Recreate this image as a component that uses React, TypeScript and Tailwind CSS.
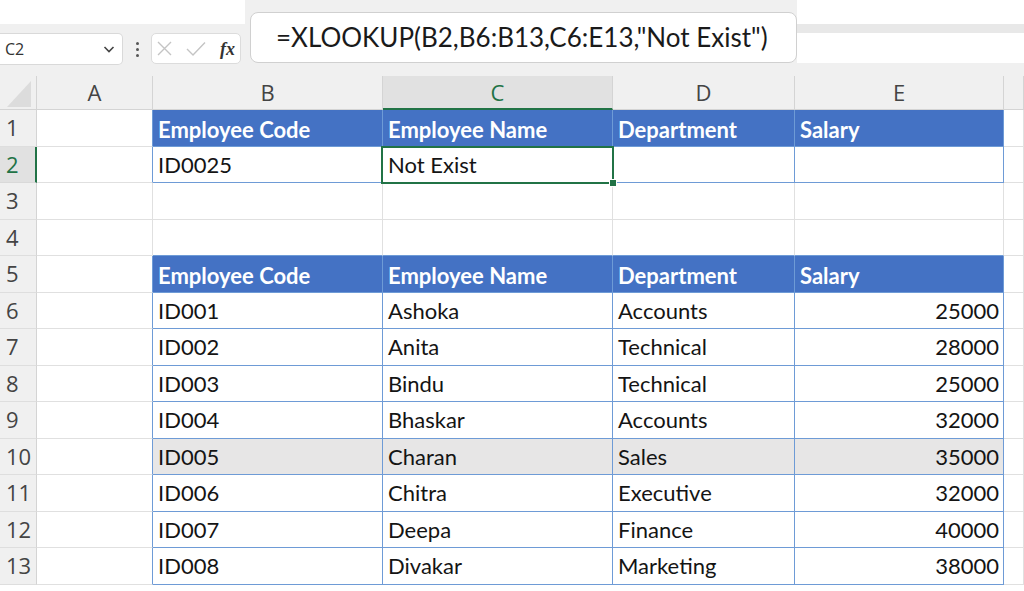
import React from "react";

const header = ["Employee Code", "Employee Name", "Department", "Salary"];
const data: string[][] = [
  ["ID001", "Ashoka", "Accounts", "25000"],
  ["ID002", "Anita", "Technical", "28000"],
  ["ID003", "Bindu", "Technical", "25000"],
  ["ID004", "Bhaskar", "Accounts", "32000"],
  ["ID005", "Charan", "Sales", "35000"],
  ["ID006", "Chitra", "Executive", "32000"],
  ["ID007", "Deepa", "Finance", "40000"],
  ["ID008", "Divakar", "Marketing", "38000"],
];

function inTable(r: number, c: number) {
  if (c < 1 || c > 4) return false;
  if (r === 1 || r === 2) return true;
  if (r >= 5 && r <= 13) return true;
  return false;
}
function isHeader(r: number) {
  return r === 1 || r === 5;
}
function content(r: number, c: number): string {
  if (c < 1 || c > 4) return "";
  if (r === 1 || r === 5) return header[c - 1];
  if (r === 2) return c === 1 ? "ID0025" : c === 2 ? "Not Exist" : "";
  if (r >= 6 && r <= 13) return data[r - 6][c - 1];
  return "";
}

const BLUE = "#4472c4";
const TB = "#6e9bd6";
const GRID = "#e0e0e0";

export default function App() {
  const cols = ["A", "B", "C", "D", "E", ""];
  const rows = Array.from({ length: 13 }, (_, i) => i + 1);
  return (
    <div
      className="w-[1024px] h-[591px] overflow-hidden bg-white relative"
      style={{ fontFamily: "Lato, 'Noto Sans', sans-serif" }}
    >
      {/* toolbar */}
      <div className="flex h-[76px]">
        <div className="w-[245px] flex flex-col">
          <div className="h-[24px] bg-white" />
          <div className="flex-1 bg-[#f0f0f0] flex items-start pt-[9px]">
            <div className="w-[123px] h-[32px] bg-white rounded-r-[5px] border border-l-0 border-[#d9d9d9] flex items-center justify-between pl-[5px] pr-[6px]">
              <span className="text-[16px] text-[#333]" style={{ fontFamily: "'Open Sans', sans-serif" }}>C2</span>
              <svg width="14" height="14" viewBox="0 0 14 14">
                <path d="M2.5 5 L7 9.5 L11.5 5" stroke="#444" strokeWidth="1.6" fill="none" />
              </svg>
            </div>
            <div className="w-[28px] h-[32px] flex flex-col items-center justify-center gap-[3px]">
              <div className="w-[3px] h-[3px] rounded-full bg-[#555]" />
              <div className="w-[3px] h-[3px] rounded-full bg-[#555]" />
              <div className="w-[3px] h-[3px] rounded-full bg-[#555]" />
            </div>
            <div className="w-[90px] h-[31px] bg-white rounded-[5px] border border-[#dcdcdc] flex items-center pl-[5px]">
              <svg width="15" height="15" viewBox="0 0 15 15">
                <path d="M1 1 L14 14 M14 1 L1 14" stroke="#c4c4c4" strokeWidth="1.4" fill="none" />
              </svg>
              <svg className="ml-[14px]" width="20" height="16" viewBox="0 0 20 16">
                <path d="M1 8 L7 14 L19 1.5" stroke="#c4c4c4" strokeWidth="1.4" fill="none" />
              </svg>
              <span
                className="ml-[14px] italic font-bold text-[18px] text-[#333] leading-none"
                style={{ fontFamily: "'Liberation Serif', serif" }}
              >
                fx
              </span>
            </div>
          </div>
        </div>
        <div className="w-[552px] bg-[#f0f0f0] pt-[12px] pl-[5px]">
          <div
            className="h-[51px] rounded-[8px] border border-[#d0d0d0] bg-white flex items-center pl-[25px] text-[26px] text-[#1a1a1a]"
            style={{ fontFamily: "Lato, sans-serif" }}
          >
            =XLOOKUP(B2,B6:B13,C6:E13,"Not Exist")
          </div>
        </div>
        <div className="flex-1 flex flex-col">
          <div className="h-[24px] bg-white" />
          <div className="h-[9px] bg-[#e8e8e8]" />
          <div className="h-[30px] bg-white" />
          <div className="flex-1 bg-[#f0f0f0]" />
        </div>
      </div>

      {/* sheet */}
      <div className="grid grid-cols-[37px_116px_230px_230px_182px_209px_20px] grid-rows-[34px_repeat(13,36.5px)_10px]">
        <div className="bg-[#f0f0f0] border-r border-b border-[#d4d4d4] flex items-end justify-end pr-[5px] pb-[2px]">
          <svg width="24" height="26" viewBox="0 0 24 26">
            <path d="M24 0 L24 26 L0 26 Z" fill="#dcdcdc" />
          </svg>
        </div>
        {cols.map((c, i) => (
          <div
            key={"h" + i}
            className={
              "flex items-center justify-center text-[22px] border-r " +
              (i === 2
                ? "bg-[#e1e1e1] text-[#217346] border-b-2 border-b-[#217346] border-r-[#d4d4d4]"
                : "bg-[#f0f0f0] text-[#444] border-b border-[#d4d4d4]")
            }
            style={{ fontFamily: "'Open Sans', sans-serif" }}
          >
            {c}
          </div>
        ))}
        {rows.map((r) => (
          <React.Fragment key={r}>
            <div
              className={
                "flex items-center pl-[6px] text-[22px] " +
                (r === 2
                  ? "bg-[#e1e1e1] text-[#217346] border-r-2 border-r-[#217346] border-b border-b-[#d9d9d9]"
                  : "bg-[#f0f0f0] text-[#444] border-r border-b border-r-[#d4d4d4] border-b-[#dedede]")
              }
              style={{ fontFamily: "'Open Sans', sans-serif" }}
            >
              {r}
            </div>
            {cols.map((_, c) => {
              const t = inTable(r, c);
              const rightBlue = t || inTable(r, c + 1);
              const bottomBlue = t || inTable(r + 1, c);
              const hdr = t && isHeader(r);
              const txt = content(r, c);
              const right = c === 4 && r >= 6;
              const shade = r === 10 && t;
              const sel = r === 2 && c === 2;
              return (
                <div
                  key={c}
                  className={
                    "relative flex items-center overflow-visible whitespace-nowrap text-[22px] px-[5px] " +
                    (hdr ? "font-bold text-white pt-[3px] " : "text-[#141414] ") +
                    (right ? "justify-end pr-[4px] " : "") +
                    (sel ? "z-10 " : "")
                  }
                  style={{
                    backgroundColor: hdr ? BLUE : shade ? "#e7e6e6" : "#ffffff",
                    borderRight: `${rightBlue ? 1.5 : 1}px solid ${rightBlue ? TB : GRID}`,
                    borderBottom: `${bottomBlue ? 1.5 : 1}px solid ${bottomBlue ? TB : GRID}`,
                  }}
                >
                  {txt}
                  {sel && (
                    <div className="absolute -left-[2px] -top-[1px] -right-[1.5px] -bottom-[1.5px] border-2 border-[#217346] pointer-events-none">
                      <div className="absolute -right-[5px] -bottom-[5px] w-[8px] h-[8px] bg-[#217346] border border-white" />
                    </div>
                  )}
                </div>
              );
            })}
          </React.Fragment>
        ))}
      </div>
    </div>
  );
}
